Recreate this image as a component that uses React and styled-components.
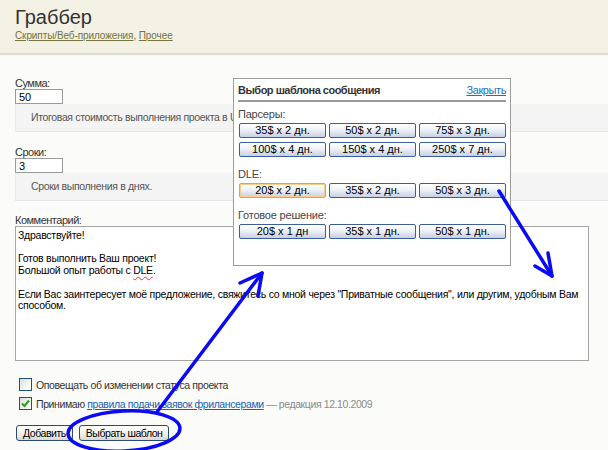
import styled, { createGlobalStyle } from "styled-components";

const GlobalStyle = createGlobalStyle`
    html, body {
        margin: 0;
        padding: 0;
        background: #fbfcfa;
    }
    body {
        font-family: "Liberation Sans", Arial, sans-serif;
        font-size: 11px;
        color: #333;
        overflow: hidden;
    }
`;

const templates = [
    {
        title: "Парсеры:",
        items: ["35$ x 2 дн.", "50$ x 2 дн.", "75$ x 3 дн.", "100$ x 4 дн.", "150$ x 4 дн.", "250$ x 7 дн."],
    },
    {
        title: "DLE:",
        items: ["20$ x 2 дн.", "35$ x 2 дн.", "50$ x 3 дн."],
        focused: 0,
    },
    {
        title: "Готовое решение:",
        items: ["20$ x 1 дн", "35$ x 1 дн.", "50$ x 1 дн."],
    },
];

export default function App(){
    return (
        <Page>
            <GlobalStyle />
            <Header>
                <Title>Граббер</Title>
                <Crumbs>
                    <CrumbLink href="#">Скрипты/Веб-приложения</CrumbLink>, <CrumbLink href="#">Прочее</CrumbLink>
                </Crumbs>
            </Header>

            <Main>
                <Label $top={22}>Сумма:</Label>
                <Input defaultValue="50" />
                <Hint>Итоговая стоимость выполнения проекта в USD.</Hint>

                <Label $top={14}>Сроки:</Label>
                <Input defaultValue="3" />
                <Hint>Сроки выполнения в днях.</Hint>

                <Label $top={13}>Комментарий:</Label>
                <Editor>
                    <p>Здравствуйте!</p>
                    <p>&nbsp;</p>
                    <p>Готов выполнить Ваш проект!</p>
                    <p>Большой опыт работы с <Misspelled>DLE</Misspelled>.</p>
                    <p>&nbsp;</p>
                    <p>Если Вас заинтересует моё предложение, свяжитесь со мной через "Приватные сообщения", или другим, удобным Вам способом.</p>
                </Editor>

                <CheckRow $top={17}>
                    <CheckBox />
                    Оповещать об изменении статуса проекта
                </CheckRow>
                <CheckRow $top={6}>
                    <CheckBox>
                        <svg width="9" height="9" viewBox="0 0 9 9">
                            <path d="M1 4.5 L3.5 7 L8 1.5" fill="none" stroke="#21a121" strokeWidth="2" />
                        </svg>
                    </CheckBox>
                    Принимаю&nbsp;<RuleLink href="#">правила подачи заявок фрилансерами</RuleLink>
                    <Muted>&nbsp;— редакция 12.10.2009</Muted>
                </CheckRow>

                <Actions>
                    <FormButton>Добавить</FormButton>
                    <FormButton>Выбрать шаблон</FormButton>
                </Actions>
            </Main>

            <Popup>
                <PopupHead>
                    <PopupTitle>Выбор шаблона сообщения</PopupTitle>
                    <CloseLink href="#">Закрыть</CloseLink>
                </PopupHead>
                <PopupLine />
                {templates.map((group, g) => (
                    <Group key={group.title} $first={g === 0}>
                        <GroupTitle>{group.title}</GroupTitle>
                        <ButtonGrid>
                            {group.items.map((item, i) => (
                                <TplButton key={item} $focused={group.focused === i}>{item}</TplButton>
                            ))}
                        </ButtonGrid>
                    </Group>
                ))}
            </Popup>

            <Annotation width="608" height="450" viewBox="0 0 608 450">
                <g fill="none" stroke="#0a0af5" strokeWidth="3.5" strokeLinecap="round" strokeLinejoin="round">
                    <ellipse cx="124" cy="431" rx="56" ry="20" transform="rotate(-3 124 431)" />
                    <path d="M157 412 L262 273" />
                    <path d="M240 283 L262 273 L258 296" />
                    <path d="M499 191 L552 276" />
                    <path d="M535 266 L552 276 L548 253" />
                </g>
            </Annotation>
        </Page>
    );
}

const Page = styled.div`
    position: relative;
    width: 608px;
    height: 450px;
    overflow: hidden;
`;

const Header = styled.div`
    height: 48px;
    padding: 5px 15px 0;
    background: #f3f0e4;
    border-bottom: 2px solid #dedcd5;
`;

const Title = styled.div`
    font-size: 20px;
    line-height: 24px;
    color: #333;
`;

const Crumbs = styled.div`
    margin-top: 1px;
    font-size: 10px;
    letter-spacing: -0.1px;
    color: #74743f;
`;

const CrumbLink = styled.a`
    color: #74743f;
    text-decoration: underline;
`;

const Main = styled.div`
    padding-left: 15px;
`;

const Label = styled.div`
    margin-top: ${(p) => p.$top}px;
    line-height: 12px;
    letter-spacing: -0.5px;
    color: #333;
`;

const Input = styled.input`
    box-sizing: border-box;
    display: block;
    width: 48px;
    height: 15px;
    margin: 0;
    padding: 0 3px;
    border: 1px solid #9a9a9a;
    background: #fff;
    font-family: inherit;
    font-size: 11px;
    color: #000;
    outline: none;
`;

const Hint = styled.div`
    box-sizing: border-box;
    height: 28px;
    padding-left: 15px;
    line-height: 27px;
    background: #f4f4f4;
    border-left: 1px solid #ececec;
    border-bottom: 1px solid #e6e6e6;
    font-size: 10.5px;
    letter-spacing: -0.35px;
    color: #555;
    white-space: nowrap;
`;

const Editor = styled.div`
    box-sizing: border-box;
    width: 574px;
    height: 135px;
    padding: 3px 2px;
    border: 1px solid #a5a5a5;
    background: #fff;
    color: #000;
    font-size: 10.5px;
    letter-spacing: -0.25px;
    line-height: 11.7px;

    p {
        margin: 0;
    }
`;

const Misspelled = styled.span`
    text-decoration: underline wavy #e03030;
    text-decoration-thickness: 1px;
    text-underline-offset: 2px;
`;

const CheckRow = styled.div`
    display: flex;
    align-items: center;
    margin-top: ${(p) => p.$top}px;
    padding-left: 4px;
    height: 13px;
    font-size: 10.5px;
    letter-spacing: -0.4px;
    color: #333;
    white-space: nowrap;
`;

const CheckBox = styled.span`
    box-sizing: border-box;
    display: flex;
    align-items: center;
    justify-content: center;
    width: 13px;
    height: 13px;
    margin-right: 4px;
    border: 1px solid #1c5180;
    background: linear-gradient(135deg, #dcdcd7 0%, #fff 85%);
`;

const RuleLink = styled.a`
    color: #1a5fb4;
    text-decoration: underline;
`;

const Muted = styled.span`
    color: #8a8a8a;
`;

const Actions = styled.div`
    display: flex;
    gap: 6px;
    margin-top: 15px;
    padding-left: 1px;
`;

const FormButton = styled.button`
    box-sizing: border-box;
    height: 16px;
    padding: 0 6px;
    border: 1px solid #2b4a78;
    border-radius: 3px;
    background: linear-gradient(#ffffff 0%, #f3f3ef 50%, #dcd8cc 100%);
    font-family: inherit;
    font-size: 10.5px;
    letter-spacing: -0.45px;
    line-height: 13px;
    color: #000;
`;

const Popup = styled.div`
    position: absolute;
    left: 233px;
    top: 78px;
    box-sizing: border-box;
    width: 278px;
    height: 188px;
    padding: 0 4px;
    background: #fff;
    border: 1px solid #9c9c9c;
`;

const PopupHead = styled.div`
    display: flex;
    justify-content: space-between;
    align-items: center;
    height: 20px;
    padding-top: 1px;
`;

const PopupTitle = styled.div`
    font-weight: bold;
    letter-spacing: -0.5px;
    color: #333;
`;

const CloseLink = styled.a`
    letter-spacing: -0.4px;
    color: #1a6fc0;
    text-decoration: underline;
`;

const PopupLine = styled.div`
    height: 2px;
    background: #999;
`;

const Group = styled.div`
    margin-top: ${(p) => (p.$first ? 6 : 11)}px;
`;

const GroupTitle = styled.div`
    line-height: 12px;
    letter-spacing: -0.2px;
    color: #444;
    margin-bottom: 3px;
`;

const ButtonGrid = styled.div`
    display: grid;
    grid-template-columns: repeat(3, 87px);
    column-gap: 3px;
    row-gap: 4px;
    padding-left: 1px;
`;

const TplButton = styled.button`
    box-sizing: border-box;
    height: 15px;
    padding: 0;
    border: 1px solid ${(p) => (p.$focused ? "#e8a23c" : "#3d5f94")};
    border-radius: 2px;
    box-shadow: ${(p) => (p.$focused ? "inset 0 0 0 1px #f7cf8a" : "none")};
    background: linear-gradient(#ffffff 0%, #eef1f7 45%, #c6d1e4 100%);
    font-family: inherit;
    font-size: 11px;
    line-height: 13px;
    color: #000;
`;

const Annotation = styled.svg`
    position: absolute;
    left: 0;
    top: 0;
    pointer-events: none;
`;
